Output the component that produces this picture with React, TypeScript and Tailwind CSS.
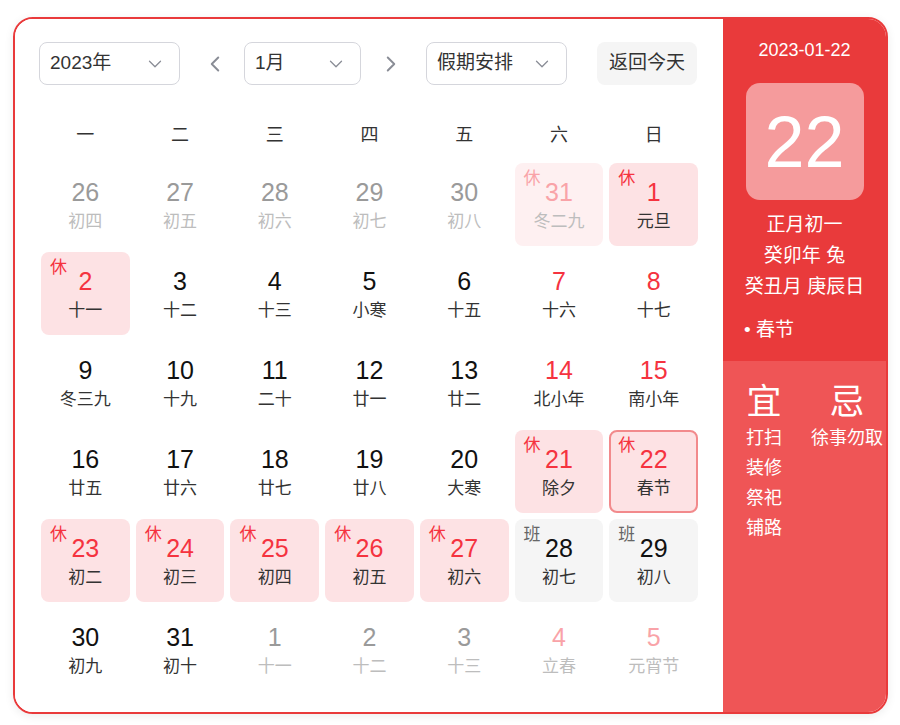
import { ChevronDown, ChevronLeft, ChevronRight } from 'lucide-react';

type Day = {
  n: number;
  lunar: string;
  dim?: boolean;
  red?: boolean;
  tag?: '休' | '班';
  today?: boolean;
};

const weeks: Day[][] = [
  [
    { n: 26, lunar: '初四', dim: true },
    { n: 27, lunar: '初五', dim: true },
    { n: 28, lunar: '初六', dim: true },
    { n: 29, lunar: '初七', dim: true },
    { n: 30, lunar: '初八', dim: true },
    { n: 31, lunar: '冬二九', dim: true, red: true, tag: '休' },
    { n: 1, lunar: '元旦', red: true, tag: '休' },
  ],
  [
    { n: 2, lunar: '十一', red: true, tag: '休' },
    { n: 3, lunar: '十二' },
    { n: 4, lunar: '十三' },
    { n: 5, lunar: '小寒' },
    { n: 6, lunar: '十五' },
    { n: 7, lunar: '十六', red: true },
    { n: 8, lunar: '十七', red: true },
  ],
  [
    { n: 9, lunar: '冬三九' },
    { n: 10, lunar: '十九' },
    { n: 11, lunar: '二十' },
    { n: 12, lunar: '廿一' },
    { n: 13, lunar: '廿二' },
    { n: 14, lunar: '北小年', red: true },
    { n: 15, lunar: '南小年', red: true },
  ],
  [
    { n: 16, lunar: '廿五' },
    { n: 17, lunar: '廿六' },
    { n: 18, lunar: '廿七' },
    { n: 19, lunar: '廿八' },
    { n: 20, lunar: '大寒' },
    { n: 21, lunar: '除夕', red: true, tag: '休' },
    { n: 22, lunar: '春节', red: true, tag: '休', today: true },
  ],
  [
    { n: 23, lunar: '初二', red: true, tag: '休' },
    { n: 24, lunar: '初三', red: true, tag: '休' },
    { n: 25, lunar: '初四', red: true, tag: '休' },
    { n: 26, lunar: '初五', red: true, tag: '休' },
    { n: 27, lunar: '初六', red: true, tag: '休' },
    { n: 28, lunar: '初七', tag: '班' },
    { n: 29, lunar: '初八', tag: '班' },
  ],
  [
    { n: 30, lunar: '初九' },
    { n: 31, lunar: '初十' },
    { n: 1, lunar: '十一', dim: true },
    { n: 2, lunar: '十二', dim: true },
    { n: 3, lunar: '十三', dim: true },
    { n: 4, lunar: '立春', dim: true, red: true },
    { n: 5, lunar: '元宵节', dim: true, red: true },
  ],
];

const weekdays = ['一', '二', '三', '四', '五', '六', '日'];

function Select({ label, width }: { label: string; width: string }) {
  return (
    <div
      className={`${width} h-[43px] flex items-center justify-between pl-[10px] pr-[13px] rounded-[8px] border-[1.5px] border-[#d5d6dc] bg-white`}
    >
      <span className="text-[19px] text-[#333]">{label}</span>
      <ChevronDown size={22} strokeWidth={1.4} className="text-[#8a8d96]" />
    </div>
  );
}

function Cell({ d }: { d: Day }) {
  let bg = '';
  if (d.tag === '休') bg = d.dim ? 'bg-[#fef0f1]' : 'bg-[#fde2e4]';
  if (d.tag === '班') bg = 'bg-[#f5f5f5]';
  const border = d.today ? 'border-2 border-[#f28a8c]' : '';

  let numColor = 'text-[#111]';
  if (d.red) numColor = d.dim ? 'text-[#f9a3a8]' : 'text-[#f5333f]';
  else if (d.dim) numColor = 'text-[#9a9a9a]';

  const lunarColor = d.dim ? 'text-[#bdbdbd]' : 'text-[#333]';

  let tagColor = 'text-[#666]';
  if (d.tag === '休') tagColor = d.dim ? 'text-[#f9a3a8]' : 'text-[#f5333f]';

  return (
    <div className={`relative h-[83px] rounded-[8px] flex flex-col items-center ${bg} ${border}`}>
      {d.tag && (
        <span
          className={`absolute ${d.today ? 'left-[7px] top-[5px]' : 'left-[9px] top-[7px]'} text-[17px] leading-[17px] ${tagColor}`}
        >
          {d.tag}
        </span>
      )}
      <span className={`${d.today ? 'mt-[13px]' : 'mt-[15px]'} text-[25px] leading-[28px] ${numColor}`}>{d.n}</span>
      <span className={`mt-[5px] text-[17px] leading-[22px] ${lunarColor}`}>{d.lunar}</span>
    </div>
  );
}

export default function App() {
  return (
    <div className="min-h-screen bg-white pt-[17px] pl-[13px] font-['Liberation_Sans','Noto_Sans_CJK_SC',sans-serif]">
      <div className="w-[875px] h-[697px] flex rounded-[20px] border-2 border-[#e93a3b] overflow-hidden shadow-[0_2px_10px_rgba(0,0,0,0.08)]">
        {/* calendar */}
        <div className="w-[708px] bg-white flex flex-col pt-[23px] pl-[24px] pr-[25px]">
          <div className="flex items-center">
            <Select label="2023年" width="w-[141px]" />
            <div className="w-[64px] flex justify-center pl-[6px]">
              <ChevronLeft size={26} strokeWidth={1.8} className="text-[#8a8d96]" />
            </div>
            <Select label="1月" width="w-[117px]" />
            <div className="w-[65px] flex justify-center pr-[6px]">
              <ChevronRight size={26} strokeWidth={1.8} className="text-[#8a8d96]" />
            </div>
            <Select label="假期安排" width="w-[141px]" />
            <div className="ml-[30px] w-[100px] h-[43px] rounded-[8px] bg-[#f5f5f5] flex items-center justify-center text-[19px] text-[#333]">
              返回今天
            </div>
          </div>

          <div className="pl-[2px]">
            <div className="mt-[30px] h-[40px] grid grid-cols-7 gap-x-[6px] items-center">
              {weekdays.map((w) => (
                <div key={w} className="text-center text-[18px] text-[#333]">
                  {w}
                </div>
              ))}
            </div>
            <div className="mt-[8px] grid grid-cols-7 gap-x-[6px] gap-y-[6px]">
              {weeks.flat().map((d, i) => (
                <Cell key={i} d={d} />
              ))}
            </div>
          </div>
        </div>

        {/* side panel */}
        <div className="flex-1 flex flex-col text-white">
          <div className="h-[342px] bg-[#e93a3b] flex flex-col items-center pt-[19px]">
            <div className="text-[18px] leading-[24px]">2023-01-22</div>
            <div className="mt-[21px] w-[118px] h-[117px] rounded-[14px] bg-[#f59b9c] flex items-center justify-center text-[72px] leading-none">
              22
            </div>
            <div className="mt-[9px] flex flex-col items-center text-[19px] leading-[31px]">
              <span>正月初一</span>
              <span>癸卯年 兔</span>
              <span>癸丑月 庚辰日</span>
            </div>
            <div className="self-start pl-[21px] mt-[16px] text-[19px] leading-[24px]">• 春节</div>
          </div>
          <div className="flex-1 bg-[#ef5556] flex pl-[23px] pt-[20px] gap-[29px]">
            <div className="flex flex-col items-center">
              <span className="text-[35px] leading-[42px]">宜</span>
              <div className="flex flex-col text-[18px] leading-[30px]">
                <span>打扫</span>
                <span>装修</span>
                <span>祭祀</span>
                <span>铺路</span>
              </div>
            </div>
            <div className="flex flex-col items-center">
              <span className="text-[35px] leading-[42px]">忌</span>
              <div className="flex flex-col text-[18px] leading-[30px]">
                <span>徐事勿取</span>
              </div>
            </div>
          </div>
        </div>
      </div>
    </div>
  );
}
